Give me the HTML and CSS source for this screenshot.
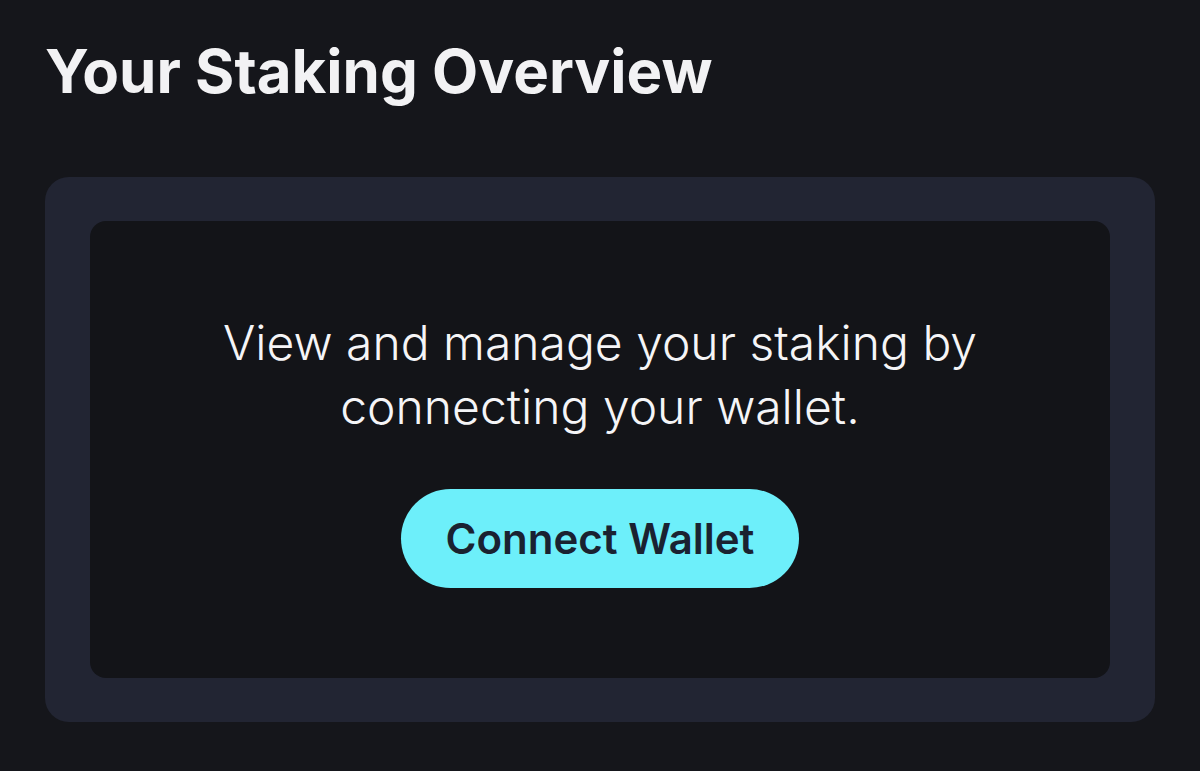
FILE: index.html
```html
<!DOCTYPE html>
<html lang="en">
<head>
<meta charset="utf-8">
<title>Your Staking Overview</title>
<link rel="stylesheet" href="styles.css">
</head>
<body>
<main class="page">
  <h1 class="title">Your Staking Overview</h1>
  <section class="card">
    <div class="card-inner">
      <p class="message">View and manage your staking by connecting your wallet.</p>
      <button class="connect-btn" type="button">Connect Wallet</button>
    </div>
  </section>
</main>
</body>
</html>
```
FILE: styles.css
```css
* { box-sizing: border-box; }
html, body { margin: 0; padding: 0; }
body {
  background: #15161b;
  font-family: "Inter", "Noto Sans", sans-serif;
  color: #f3f3f5;
  width: 1200px;
  height: 771px;
  overflow: hidden;
}
.page {
  padding: 35px 45px 0 45px;
}
.title {
  margin: 0 0 70px 0;
  font-size: 60px;
  line-height: 72px;
  font-weight: 700;
  color: #f2f2f4;
  letter-spacing: 0;
}
.card {
  width: 1110px;
  background: #222533;
  border-radius: 24px;
  padding: 44px 45px;
}
.card-inner {
  background: #131418;
  border-radius: 16px;
  height: 457px;
  padding-top: 90px;
  display: flex;
  flex-direction: column;
  align-items: center;
}
.message {
  margin: 0;
  max-width: 800px;
  text-align: center;
  font-size: 48px;
  line-height: 64px;
  font-weight: 300;
  color: #f5f5f7;
}
.connect-btn {
  margin-top: 50px;
  width: 398px;
  height: 99px;
  border: none;
  border-radius: 50px;
  background: #6deffa;
  color: #1a2231;
  font-family: "Inter", "Noto Sans", sans-serif;
  font-size: 42px;
  font-weight: 600;
  cursor: pointer;
  padding: 0;
}
```
